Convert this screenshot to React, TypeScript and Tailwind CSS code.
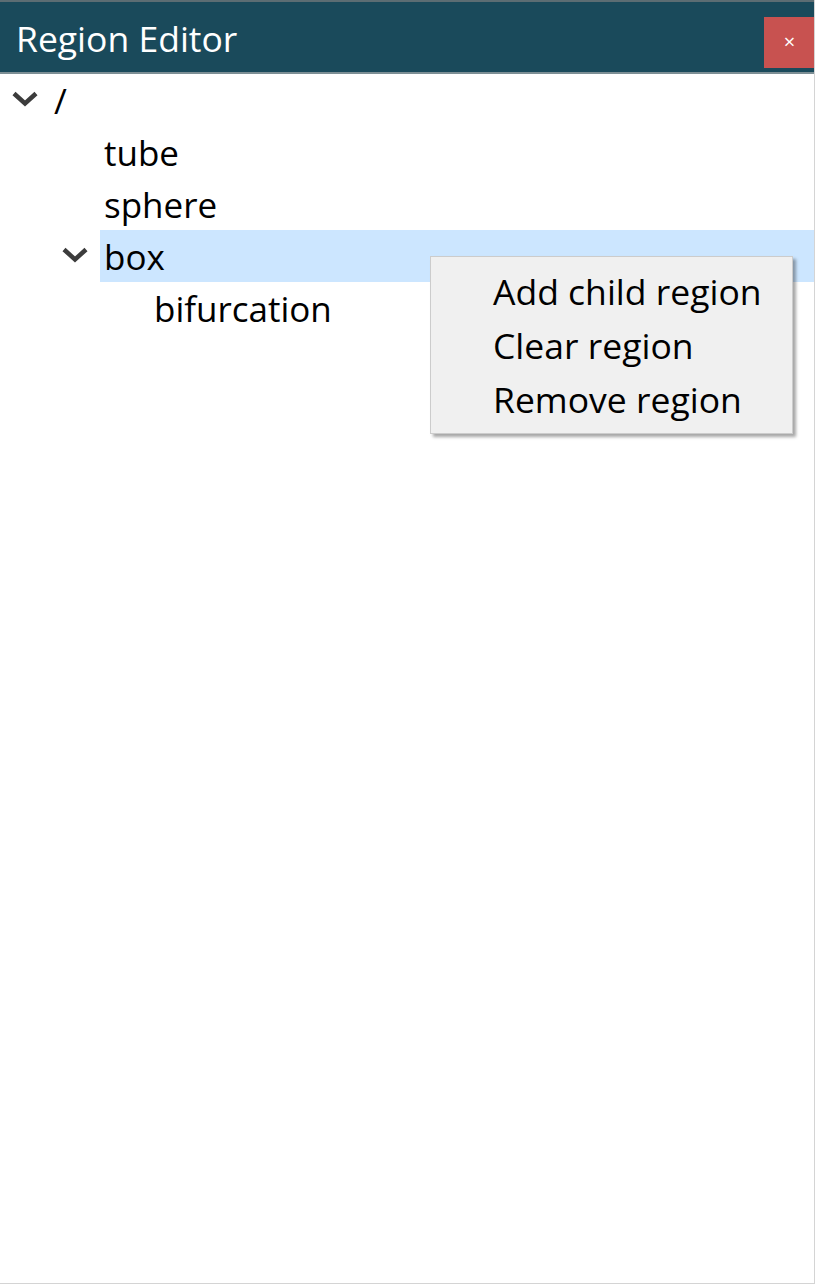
type Node = { name: string; depth: number; open?: boolean; selected?: boolean };

const nodes: Node[] = [
  { name: "/", depth: 0, open: true },
  { name: "tube", depth: 1 },
  { name: "sphere", depth: 1 },
  { name: "box", depth: 1, open: true, selected: true },
  { name: "bifurcation", depth: 2 },
];

const indent = ["pl-[12px]", "pl-[62px]", "pl-[112px]"];

function Chevron() {
  return (
    <svg width="26" height="16" viewBox="0 0 26 16" className="-mt-[2px]">
      <polyline points="2,2.5 13,12.5 24,2.5" fill="none" stroke="#3c3c3c" strokeWidth="4.5" strokeLinejoin="miter" />
    </svg>
  );
}

export default function App() {
  return (
    <div
      className="w-[815px] h-[1284px] bg-white flex flex-col border-r border-b border-[#d4d4d4] overflow-hidden"
      style={{ fontFamily: '"Open Sans", "Noto Sans", sans-serif' }}
    >
      {/* Header */}
      <div className="h-[74px] bg-[#1a4a5b] border-t-2 border-[#5c6d73] border-b-2 border-b-[#7d8f95] flex items-center justify-between pl-[16px]">
        <h1 className="text-white text-[35.5px] leading-none mt-[3px]">Region Editor</h1>
        <button className="w-[51px] h-[51px] mt-[10px] bg-[#c85250] text-white flex items-center justify-center text-[20px] leading-none -mr-px">
          ×
        </button>
      </div>

      {/* Tree */}
      <div className="relative">
        {nodes.map((n) => (
          <div key={n.name} className={`h-[52px] flex items-center ${indent[n.depth]}`}>
            <div className="w-[38px] flex items-center">{n.open && <Chevron />}</div>
            <div
              className={`h-full flex items-center pl-[4px] pt-[3px] text-[35px] text-black ${
                n.selected ? "bg-[#cce6ff] flex-1" : ""
              }`}
            >
              {n.name}
            </div>
          </div>
        ))}

        {/* Context menu */}
        <div className="absolute left-[430px] top-[182px] w-[363px] bg-[#f0f0f0] border border-[#cccccc] shadow-[3px_3px_3px_rgba(0,0,0,0.35)] pt-[8px] pb-[6px]">
          {["Add child region", "Clear region", "Remove region"].map((item) => (
            <div key={item} className="h-[54px] flex items-center pl-[62px] text-[35.5px] text-black">
              {item}
            </div>
          ))}
        </div>
      </div>
    </div>
  );
}
